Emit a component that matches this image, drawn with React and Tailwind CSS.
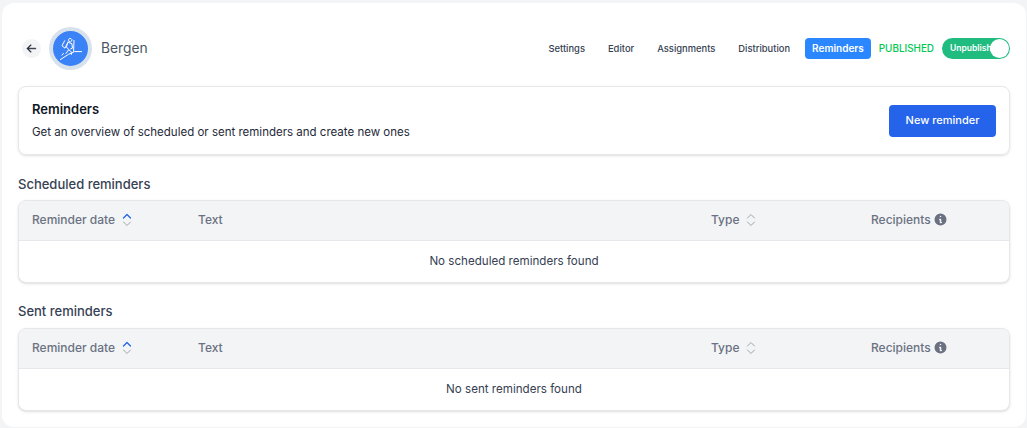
import React from "react";
import { HiInformationCircle } from "react-icons/hi";
import { HiArrowLeft } from "react-icons/hi2";

const Sort = ({ active }) => (
  <svg width="10" height="16" viewBox="0 0 10 16" fill="none" strokeLinecap="round" strokeLinejoin="round">
    <path d="M1.5 6 L5 2.5 L8.5 6" strokeWidth={active ? 1.3 : 1} stroke={active ? "#2563eb" : "#9ca3af"} />
    <path d="M1.5 10 L5 13.5 L8.5 10" strokeWidth="1" stroke="#9ca3af" />
  </svg>
);

const Hiker = () => (
  <svg width="24" height="24" viewBox="0 0 24 24" fill="none" stroke="white" strokeWidth="1" strokeLinecap="round" strokeLinejoin="round">
    <path d="M9.6 2.6a1.7 1.7 0 1 1 3 1.5l-1.2.8-1.7-1z" />
    <path d="M9 5.2l4 1.6.4 4.4-1.6.6" strokeDasharray="2 .6" />
    <path d="M9 5.2l-1.6 4.6 2.4 3 3 2.6-.4 2" strokeDasharray="2 .6" />
    <path d="M5.6 3.8l-2.6 5 3 2.4 2.2-4.6" strokeDasharray="2 .6" />
    <path d="M15 3.4l-.4 11" />
    <path d="M9.6 12.8l-2.6 3.6" />
    <path d="M1.4 22.6l8-5.2 3-1.4 3-1.4h7.2" />
    <path d="M4.4 16.4l-1.4 1.8" />
  </svg>
);

const Table = ({ empty }) => (
  <div className="rounded-lg border border-gray-200 shadow-sm overflow-hidden bg-white">
    <div className="flex items-center h-10 bg-gray-100 border-b border-gray-200 text-[12px] font-medium text-gray-500 pb-[2px]">
      <div className="w-[179px] pl-[13px] flex items-center gap-[7px]">Reminder date <Sort active /></div>
      <div className="w-[513px]">Text</div>
      <div className="w-[160px] flex items-center gap-[7px]">Type <Sort /></div>
      <div className="flex items-center gap-[2px]">Recipients <HiInformationCircle className="text-gray-500 text-[15px]" /></div>
    </div>
    <div className="h-[41px] flex items-center justify-center text-[11.6px] text-gray-700">{empty}</div>
  </div>
);

export default function App() {
  return (
    <div className="h-[428px] w-[1027px] overflow-hidden bg-gray-100 pl-[2px] pt-[3px] pr-px pb-px font-['Inter',sans-serif]">
      <div className="h-full bg-white rounded-xl px-4 pt-[24px]">
        <div className="flex items-center h-[43px] pl-1">
          <button className="w-[19px] h-[19px] rounded-full bg-gray-100 flex items-center justify-center text-gray-900">
            <HiArrowLeft className="text-[11px]" strokeWidth={1.2} />
          </button>
          <div className="ml-2 w-[43px] h-[43px] rounded-full bg-[#3b82f6] border-[4px] border-[#d8e2ec] flex items-center justify-center">
            <Hiker />
          </div>
          <span className="ml-[9px] text-[13.8px] text-gray-600">Bergen</span>
          <div className="ml-auto flex items-center text-[9.4px] font-medium text-gray-700">
            <a className="px-[7.5px] mr-[8px] leading-[21px]">Settings</a>
            <a className="px-[7.5px] mr-[8px] leading-[21px]">Editor</a>
            <a className="px-[7.5px] mr-[8px] leading-[21px]">Assignments</a>
            <a className="px-[7.5px] mr-[7.5px] leading-[21px]">Distribution</a>
            <a className="px-[7px] leading-[21px] bg-[#2b87ff] text-white rounded font-semibold text-[10px]">Reminders</a>
            <span className="ml-2 text-green-500 text-[9.9px]">PUBLISHED</span>
            <div className="ml-2 w-[68px] h-[21px] bg-[#1fbb7f] rounded-full relative flex items-center pl-2 text-white text-[8.5px] font-semibold whitespace-nowrap">
              Unpublish
              <span className="absolute right-[1px] top-[1px] w-[19px] h-[19px] bg-white rounded-full" />
            </div>
          </div>
        </div>

        <div className="mt-[16px] h-[69px] rounded-lg border border-gray-200 shadow-sm flex items-center justify-between pl-[13px] pr-[13px]">
          <div className="pt-[2px]">
            <div className="text-[13px] font-semibold text-gray-900 leading-[20px] -mt-[2px]">Reminders</div>
            <div className="text-[11.5px] text-gray-800 mt-[3px] leading-[20px]">Get an overview of scheduled or sent reminders and create new ones</div>
          </div>
          <button className="w-[107px] h-8 bg-[#2563eb] rounded text-white text-[11px] font-medium">New reminder</button>
        </div>

        <h2 className="mt-[19px] text-[13px] font-medium text-gray-700 leading-[20px]">Scheduled reminders</h2>
        <div className="mt-[6px]"><Table empty="No scheduled reminders found" /></div>
        <h2 className="mt-[18px] text-[13px] font-medium text-gray-700 leading-[20px]">Sent reminders</h2>
        <div className="mt-[7px]"><Table empty="No sent reminders found" /></div>
      </div>
    </div>
  );
}
